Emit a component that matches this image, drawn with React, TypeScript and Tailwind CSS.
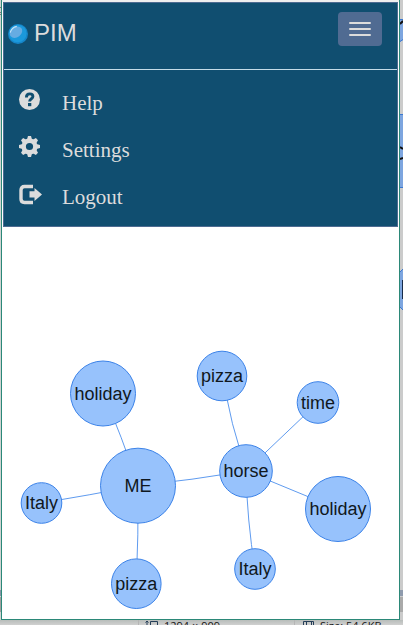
import React from "react";

const nodes = [
  { label: "holiday", x: 103, y: 393.5, r: 32.5 },
  { label: "pizza", x: 222, y: 376, r: 24.8 },
  { label: "time", x: 318, y: 402.5, r: 20.8 },
  { label: "ME", x: 138, y: 485.7, r: 37.5 },
  { label: "horse", x: 246, y: 471, r: 26.3 },
  { label: "Italy", x: 41.5, y: 503, r: 20.3 },
  { label: "holiday", x: 338, y: 509, r: 32.5 },
  { label: "Italy", x: 255, y: 569, r: 20.3 },
  { label: "pizza", x: 136.3, y: 583.7, r: 24.8 },
];

const edges = [
  "M103 393.5Q122 436 138 485.7",
  "M138 485.7Q192 480 246 471",
  "M41.5 503Q90 495 138 485.7",
  "M138 485.7Q138.5 535 136.3 583.7",
  "M222 376Q231 424 246 471",
  "M318 402.5L246 471",
  "M246 471L338 509",
  "M246 471Q247 520 255 569",
];

function HelpIcon() {
  return (
    <svg width="24" height="22" viewBox="0 0 24 22" className="shrink-0">
      <circle cx="10.5" cy="10.5" r="10.5" fill="#dcdcdc" />
      <path d="M7.4 8.4C7.4 5.8 8.5 4.9 10.8 4.9C12.9 4.9 13.9 5.8 13.9 7.4C13.9 9.9 10.6 9.6 10.6 12.6" fill="none" stroke="#104e70" strokeWidth="2.9" />
      <rect x="9" y="14" width="3.3" height="3.2" fill="#104e70" />
    </svg>
  );
}

function CogIcon() {
  return (
    <svg width="24" height="22" viewBox="0 0 24 22" className="shrink-0">
      <g fill="#dcdcdc" transform="translate(10.5 10.5)">
        {[0, 45, 90, 135, 180, 225, 270, 315].map((a) => (
          <path key={a} d="M-2.5-7L-1.5-10.5H1.5L2.5-7Z" transform={`rotate(${a})`} />
        ))}
      </g>
      <circle cx="10.5" cy="10.5" r="5.8" fill="none" stroke="#dcdcdc" strokeWidth="4.4" />
    </svg>
  );
}

function LogoutIcon() {
  return (
    <svg width="24" height="22" viewBox="0 0 24 22" className="shrink-0">
      <path d="M14 3.5H5.5Q2 3.5 2 7V16Q2 19.5 5.5 19.5H14" fill="none" stroke="#dcdcdc" strokeWidth="3.4" />
      <path d="M10.5 8.3H15.5V4.9L23 11.4L15.5 17.9V14.5H10.5Z" fill="#dcdcdc" />
    </svg>
  );
}

function Navbar() {
  const items = [
    { label: "Help", icon: <HelpIcon /> },
    { label: "Settings", icon: <CogIcon /> },
    { label: "Logout", icon: <LogoutIcon /> },
  ];
  return (
    <nav className="h-[225px] w-[395px] border border-[#4d6b91] bg-[#104e70] text-[#dcdcdc]">
      <div className="flex h-[67px] items-start justify-between border-b border-[#c5dce8] pr-[15px] pl-1">
        <div className="flex items-center pt-4">
          <svg width="20" height="20" viewBox="0 0 20 20" className="mt-0.5">
            <circle cx="10" cy="10" r="10" fill="#1686c9" />
            <circle cx="9.7" cy="9.5" r="8.8" fill="#1b99dc" />
            <ellipse cx="8" cy="8.2" rx="6.7" ry="5.2" fill="#66ace2" transform="rotate(-38 8 8.2)" />
            <path d="M2.2 8.7Q3.4 3.5 8.8 2.4" fill="none" stroke="#c4e3f7" strokeWidth="1.1" />
          </svg>
          <span className="ml-1.5 text-[24px] leading-[28px]">PIM</span>
        </div>
        <button aria-label="Menu" className="mt-[9px] flex h-[34px] w-11 flex-col items-center justify-center gap-1 rounded bg-[#506b92]">
          <span className="h-0.5 w-[22px] rounded-[1px] bg-[#dcdcdc]" />
          <span className="h-0.5 w-[22px] rounded-[1px] bg-[#dcdcdc]" />
          <span className="h-0.5 w-[22px] rounded-[1px] bg-[#dcdcdc]" />
        </button>
      </div>
      <ul className="pt-[10px] pl-[15px] font-['Liberation_Serif',serif] text-[21px]">
        {items.map((item) => (
          <li key={item.label} className="flex h-[47px] items-start pt-[9px]">
            {item.icon}
            <span className="mt-[2px] ml-[19px] leading-[24px]">{item.label}</span>
          </li>
        ))}
      </ul>
    </nav>
  );
}

function Graph() {
  return (
    <svg width="397" height="392" viewBox="2 227 397 392" className="block">
      {edges.map((d) => (
        <path key={d} d={d} fill="none" stroke="#5f9bef" strokeWidth="1" />
      ))}
      {nodes.map((n, i) => (
        <g key={i}>
          <circle cx={n.x} cy={n.y} r={n.r} fill="#97c2fc" stroke="#3b82e8" strokeWidth="1" />
          <text x={n.x} y={n.y + 6.2} textAnchor="middle" fontSize="18" fill="#101820">{n.label}</text>
        </g>
      ))}
    </svg>
  );
}

function RightStrip() {
  return (
    <svg width="3" height="620" viewBox="0 0 3 620" className="shrink-0">
      <rect width="3" height="620" fill="#cbcbcb" />
      <path d="M0 19H3V40L0 42Z" fill="#7da5df" />
      <path d="M0 24L3 21" stroke="#111" strokeWidth="2" />
      <path d="M0 41.5L3 39.5M0 19.5H3" stroke="#3b78d0" />
      <path d="M0 114H3V188H0Z" fill="#7da5df" />
      <path d="M0 114.5H3M0 187.5H3" stroke="#3b78d0" />
      <path d="M0 147L3 149M0 159L3 158" stroke="#111" strokeWidth="2" />
      <path d="M0 272L3 269V310L0 307Z" fill="#7da5df" />
      <path d="M0 272L3 269M0 307L3 310" stroke="#3b78d0" />
      <path d="M2.5 280V299" stroke="#182b49" />
      <rect y="590" width="3" height="6" fill="#8f9bad" />
      <rect y="597" width="3" height="15" fill="#aaa" />
    </svg>
  );
}

export default function App() {
  return (
    <div className="flex h-[625px] w-[403px] flex-col overflow-hidden bg-[#cfcfcf] font-['Liberation_Sans',Arial,sans-serif]">
      <div className="flex h-[620px] shrink-0">
        <svg width="1" height="620" className="shrink-0">
          <rect width="1" height="620" fill="#cfd3d2" />
          <path d="M0 7.5H1M0 12.5H1M0 14.5H1" stroke="#7a7a7a" />
          <rect y="590" width="1" height="6" fill="#8595a5" />
          <rect y="597" width="1" height="15" fill="#a0a0a0" />
        </svg>
        <main className="h-[620px] w-[399px] shrink-0 border-x border-b border-[#2b8878] bg-white">
          <div className="h-0.5 bg-[#efefef]" />
          <div className="pl-px"><Navbar /></div>
          <Graph />
        </main>
        <RightStrip />
      </div>
      <footer className="flex h-[5px] shrink-0 overflow-hidden bg-gradient-to-b from-[#b8bdba] to-[#d0d0d0] text-[11px] leading-[12px] text-[#151515]">
        <div className="flex w-[139px] border-r border-[#b5b5b5]" />
        <div className="flex w-[156px] border-r border-[#b5b5b5] pl-[6px]">
          <svg width="14" height="5" viewBox="0 0 14 5" className="shrink-0">
            <path d="M2 5V1M0.5 2.5L2 1L3.5 2.5M5.5 5V1.5H12.5V5" fill="none" stroke="#253e58" />
          </svg>
          <span className="ml-[5px] whitespace-pre font-['Open_Sans',sans-serif]">1294 × 909</span>
        </div>
        <div className="flex pl-2">
          <svg width="11" height="5" viewBox="0 0 11 5" className="shrink-0">
            <path d="M0.5 5V1.5H10.5V5M3.5 5V1.5M8.5 5V1.5" fill="none" stroke="#253e58" />
          </svg>
          <span className="ml-[6px] whitespace-pre font-['Open_Sans',sans-serif]">Size: 54.6KB</span>
        </div>
      </footer>
    </div>
  );
}
